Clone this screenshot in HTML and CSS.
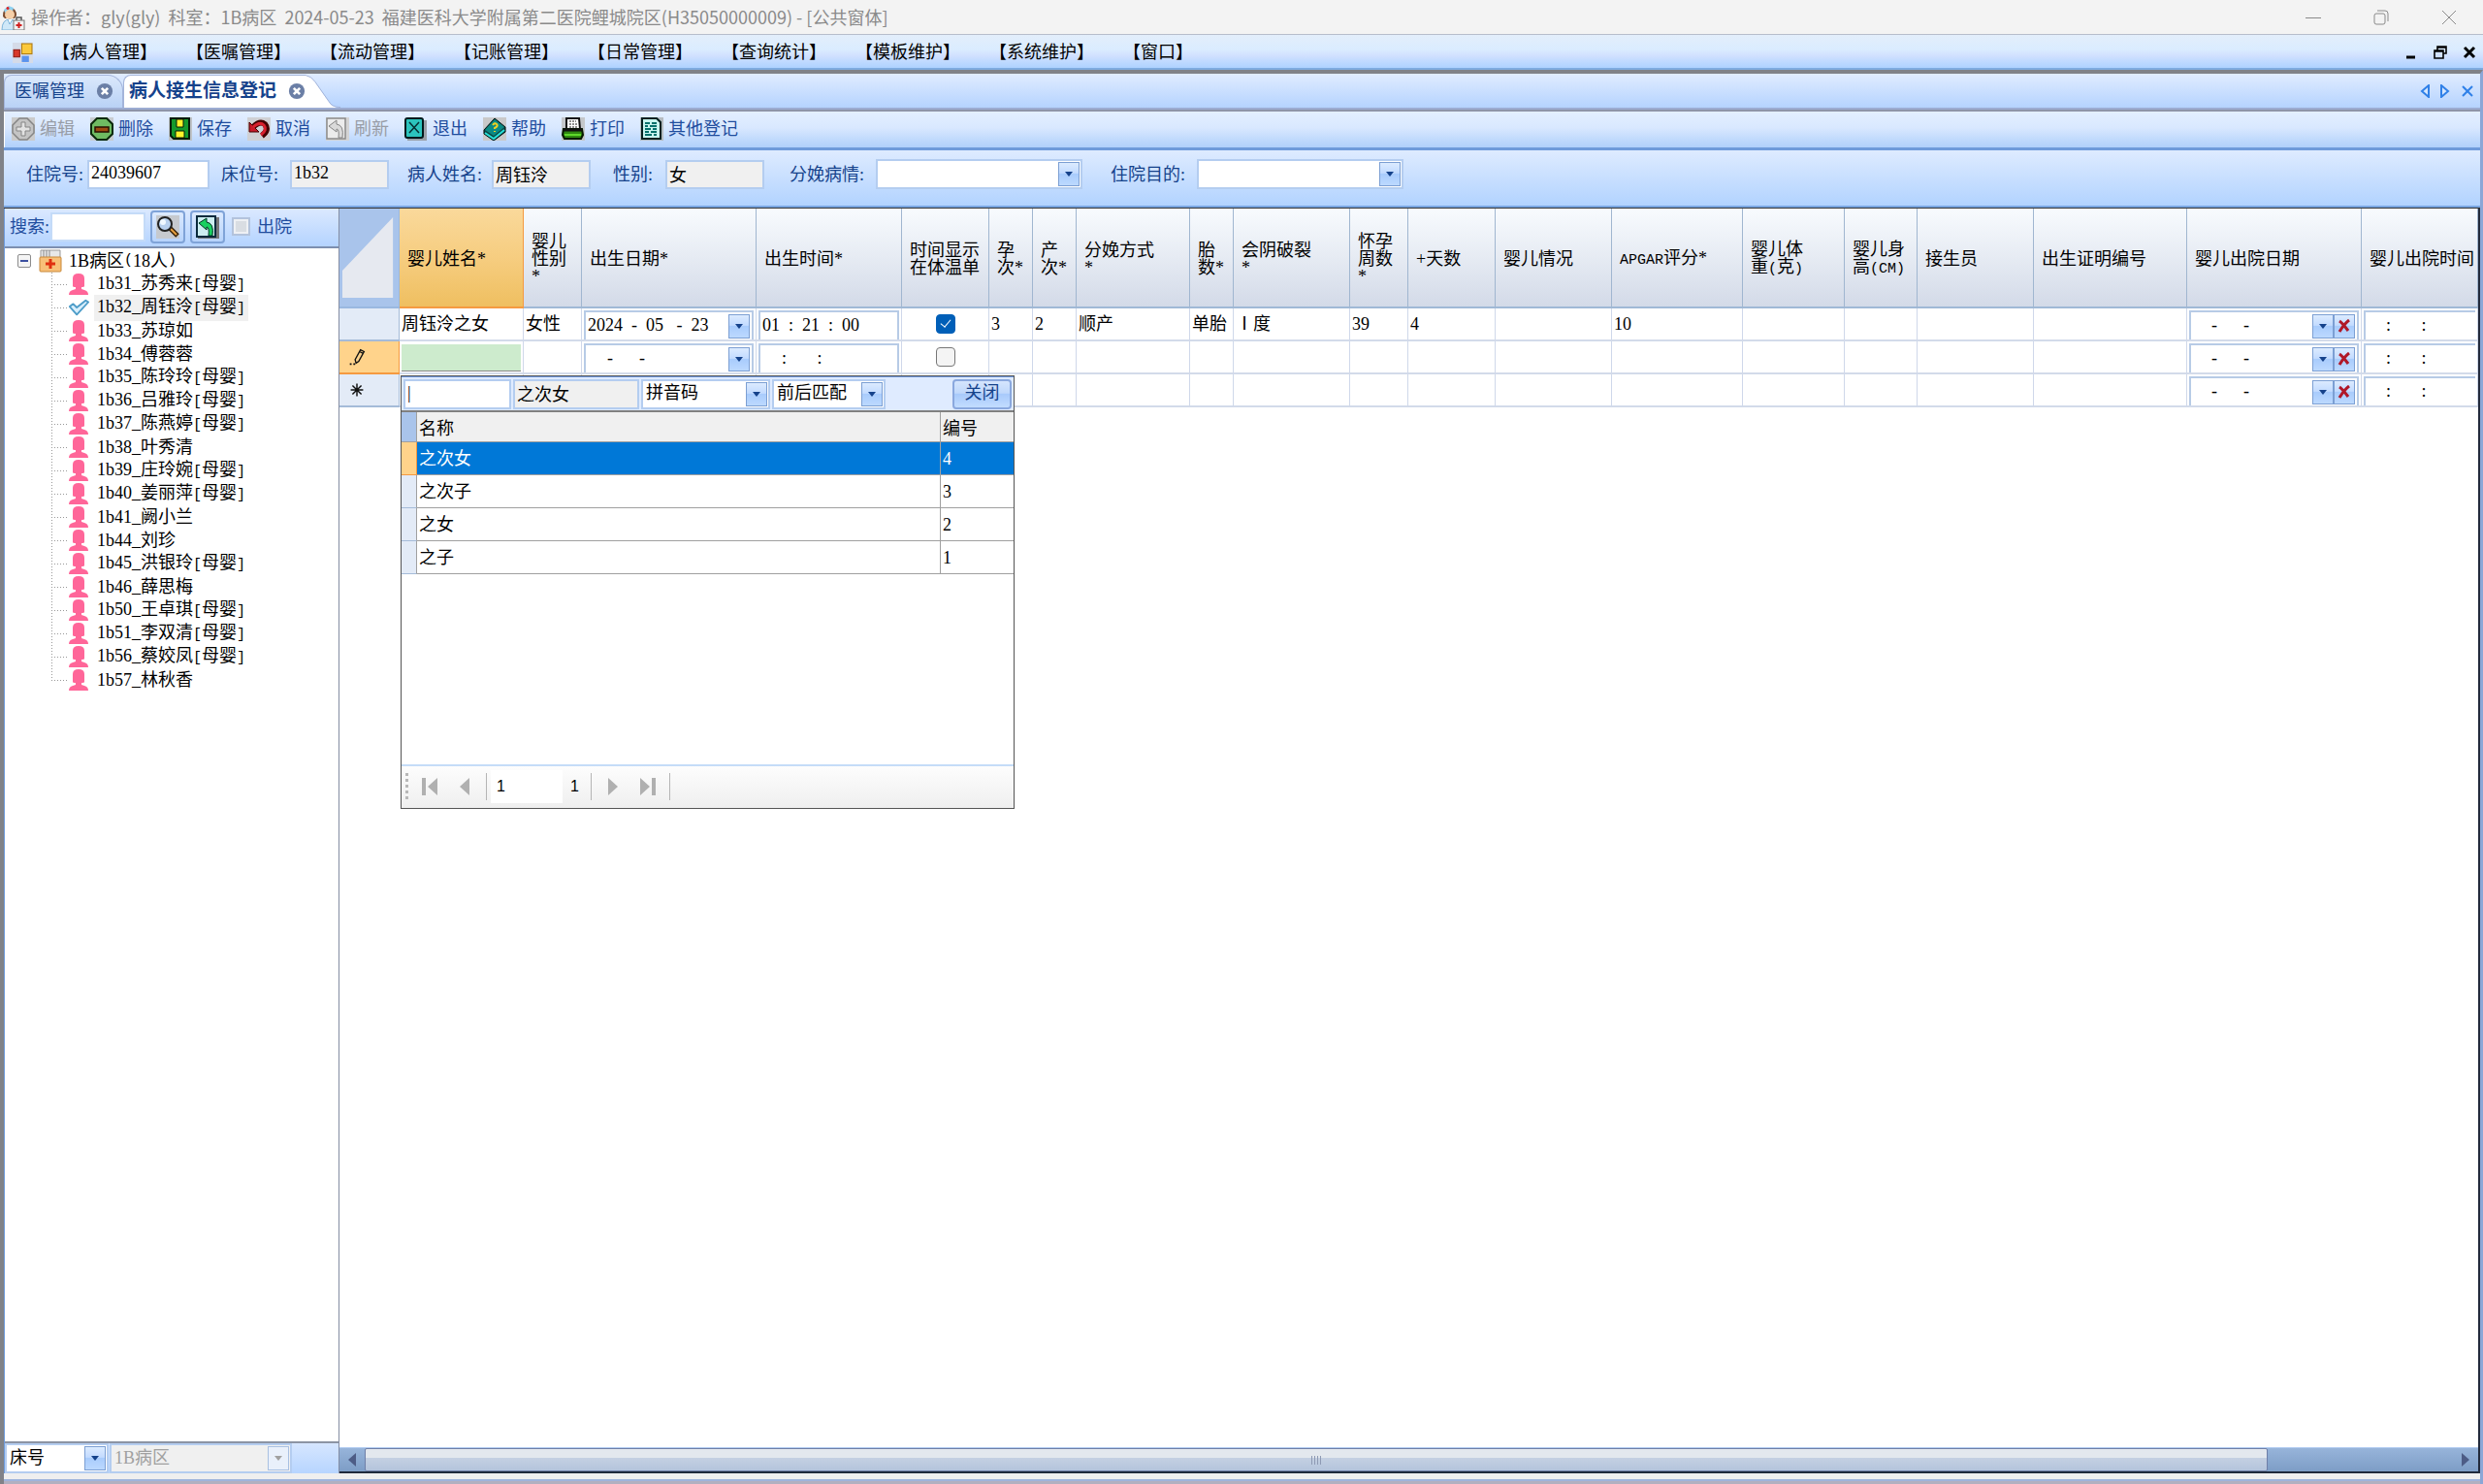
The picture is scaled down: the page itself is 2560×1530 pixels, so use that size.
FILE: index.html
```html
<!DOCTYPE html>
<html lang="zh-CN">
<head>
<meta charset="utf-8">
<title>病人接生信息登记</title>
<link rel="stylesheet" href="styles.css">
</head>
<body>
<svg class="defs" aria-hidden="true">
  <symbol id="i-woman" viewBox="0 0 22 24"><path fill="#ff6699" d="M5 14V6q0-5 6-5t6 5v8q0 1-2 1h-1v2l3 1q4 1 4 5H1q0-4 4-5l3-1v-2H7q-2 0-2-1z"/></symbol>
  <symbol id="i-check" viewBox="0 0 24 20"><path d="M2 9l4-3 4 4L20 2l3 2L10 18Z" fill="#d8eefc" stroke="#4c9cc8" stroke-width="2" stroke-linejoin="round"/></symbol>
  <symbol id="i-down" viewBox="0 0 8 5"><path d="M0 0h8L4 5z" fill="currentColor"/></symbol>
  <symbol id="i-x" viewBox="0 0 14 14"><path d="M2 2c3 2 6 6 9 10M12 1C8 4 5 8 2 13" stroke="#b01828" stroke-width="3" fill="none"/></symbol>
  <symbol id="i-close" viewBox="0 0 20 20"><circle cx="10" cy="10" r="9" fill="#6b7fa6"/><path d="M6.500 6.500l7 7m0-7l-7 7" stroke="#fff" stroke-width="3"/></symbol>
</svg>

<header class="titlebar">
  <svg class="app-icon" viewBox="0 0 26 26"><path d="M3 12q-1-8 7-9 7 0 7 8l-2 3H5z" fill="#7a4a2c"/><path d="M4 5l5-4 5 2-1 4-8 1z" fill="#8fd0f0"/><path d="M8 2v3M6.500 3.500h3" stroke="#e02020" stroke-width="1.500"/><circle cx="10" cy="10" r="5" fill="#f6cfa8"/><path d="M2 26q0-11 8-11t8 11z" fill="#cfe8f8" stroke="#7db4da"/><path d="M8 15l2 5 3-5" fill="#fff" stroke="#7db4da"/><path d="M17 16v-3h5v3" fill="none" stroke="#555" stroke-width="1.500"/><rect x="14" y="16" width="11" height="10" fill="#f2f2f2" stroke="#777"/><path d="M19.500 18v6m-3-3h6" stroke="#d02020" stroke-width="2"/></svg>
  <h1 class="title">操作者：gly(gly)&nbsp; 科室：1B病区&nbsp; 2024-05-23&nbsp; 福建医科大学附属第二医院鲤城院区(H35050000009) - [公共窗体]</h1>
  <div class="win-buttons">
    <button aria-label="最小化"><svg viewBox="0 0 16 16"><path d="M0 8.500h16"/></svg></button>
    <button aria-label="还原"><svg viewBox="0 0 16 16"><rect x="1" y="4" width="11" height="11" rx="2"/><path d="M4 1h8q3 0 3 3v8"/></svg></button>
    <button aria-label="关闭"><svg viewBox="0 0 16 16"><path d="M1 1l14 14M15 1L1 15"/></svg></button>
  </div>
</header>

<nav class="menubar">
  <svg class="mdi-icon" viewBox="0 0 20 20"><rect width="20" height="20" fill="#d5dbe8"/><rect x="9" y="1" width="10" height="10" fill="#fbc93c" stroke="#b07c10"/><rect x="1" y="7" width="6" height="7" fill="#d8382a" stroke="#8e1a12"/><rect x="9" y="13" width="7" height="6" fill="#5b93ee"/></svg>
  <div class="menus">
    <button>【病人管理】</button><button>【医嘱管理】</button><button>【流动管理】</button><button>【记账管理】</button><button>【日常管理】</button><button>【查询统计】</button><button>【模板维护】</button><button>【系统维护】</button><button>【窗口】</button>
  </div>
  <div class="mdi-buttons">
    <button aria-label="最小化子窗口"><svg viewBox="0 0 14 14"><path d="M2 12h9" stroke-width="3"/></svg></button>
    <button aria-label="还原子窗口"><svg viewBox="0 0 14 14"><path d="M4 5V1h9v7H10M4 2h9M1 5h9v8H1zM1 6h9" stroke-width="1.600"/></svg></button>
    <button aria-label="关闭子窗口"><svg viewBox="0 0 14 14"><path d="M2 2l10 10M12 2L2 12" stroke-width="3"/></svg></button>
  </div>
</nav>

<div class="workspace">
  <div class="tabstrip">
    <div class="tab tab-idle"><a href="#orders">医嘱管理</a><button aria-label="关闭标签"><svg><use href="#i-close"/></svg></button></div>
    <div class="tab tab-active"><a href="#birth">病人接生信息登记</a><button aria-label="关闭标签"><svg><use href="#i-close"/></svg></button>
    </div><svg class="tab-slope" viewBox="0 0 36 34"><path d="M0 0q6 2 10 8l14 20q3 6 12 6H0z" fill="#fff"/><path d="M0 .5q6 1 10 7l14 20q3 6 12 6" fill="none" stroke="#a3b4da"/></svg>
    <div class="tab-nav">
      <button aria-label="上一个"><svg viewBox="0 0 10 14"><path d="M9 1v12L2 7z"/></svg></button>
      <button aria-label="下一个"><svg viewBox="0 0 10 14"><path d="M1 1v12l7-6z"/></svg></button>
      <button aria-label="关闭"><svg class="x" viewBox="0 0 12 14"><path d="M1 2l10 10M11 2L1 12"/></svg></button>
    </div>
  </div>

  <div class="toolbar">
    <button disabled><svg viewBox="0 0 24 24"><rect width="24" height="24" fill="#cbcbcb"/><path d="M8 1h8l7 7v8l-7 7H8l-7-7V8z" fill="#c4c4c4" stroke="#858585" stroke-width="1.500"/><path d="M10 5h4v5h5v4h-5v5h-4v-5H5v-4h5z" fill="#e2e2e2" stroke="#858585"/></svg>编辑</button>
    <button><svg viewBox="0 0 24 24"><rect width="24" height="24" fill="#c8ccd0"/><path d="M7 1h10l6 6v10l-6 6H7l-6-6V7z" fill="#6fbb62" stroke="#0b2a0b" stroke-width="2"/><rect x="5" y="10" width="14" height="5" fill="#9c4a10" stroke="#2a1000" stroke-width="1.500"/></svg>删除</button>
    <button><svg viewBox="0 0 24 24"><rect width="24" height="24" fill="#bfc3c8"/><path d="M2 1h19v21H5l-3-3z" fill="#149a2c" stroke="#041a06" stroke-width="2"/><path d="M8 2h7v8H8zM7 14h9v7H7z" fill="#fff52a" stroke="#041a06"/></svg>保存</button>
    <button><svg viewBox="0 0 24 24"><rect width="24" height="24" fill="#cfd0d4"/><path d="M6 10q7-7 12-3 5 6-3 12" fill="none" stroke="#400" stroke-width="6"/><path d="M2 5v10h10z" fill="#c81828" stroke="#400"/><path d="M6 10q7-6 11-2 4 5-3 10" fill="none" stroke="#d8202e" stroke-width="3"/></svg>取消</button>
    <button disabled><svg viewBox="0 0 24 24"><rect width="24" height="24" fill="#d4d4d4"/><rect x="1" y="1" width="19" height="21" fill="#ececec" stroke="#8a8a8a" stroke-width="1.500"/><path d="M3 9l8-6v4q8 1 6 14h-4q1-9-2-9v3z" fill="#dadada" stroke="#858585"/></svg>刷新</button>
    <button><svg viewBox="0 0 24 24"><rect x="3" y="3" width="20" height="21" fill="#9aa0a8"/><rect x="1" y="1" width="18" height="20" rx="2" fill="#2cc4bd" stroke="#02191c" stroke-width="2"/><path d="M5 5l10 11M15 5L5 16" stroke="#053034" stroke-width="1.500"/></svg>退出</button>
    <button><svg viewBox="0 0 24 24"><rect width="24" height="24" fill="#c9c9c9"/><path d="M1 13L12 1l11 9v5l-12 9-10-7z" fill="#0a4a48" stroke="#021414"/><path d="M2 13L12 2l10 8-11 9z" fill="#0b8a84"/><path d="M2 16l9 6 11-9" fill="none" stroke="#28e0d8" stroke-width="2"/><path d="M10 8q2-3 4-1t-2 4v1m0 2v1" fill="none" stroke="#f0d020" stroke-width="2"/></svg>帮助</button>
    <button><svg viewBox="0 0 24 24"><rect width="24" height="24" fill="#c4c7ca"/><path d="M5 1h13l1 11H5z" fill="#fff" stroke="#111" stroke-width="2"/><path d="M8 4h7M8 7h8M8 10h8" stroke="#222" stroke-dasharray="2 1"/><path d="M2 12h19l1 6-2 4H3l-2-4z" fill="#2f8a10" stroke="#061a02" stroke-width="2"/><path d="M2 13h19" stroke="#111" stroke-width="3"/><path d="M3 18h17" stroke="#5fd82a" stroke-width="2"/></svg>打印</button>
    <button><svg viewBox="0 0 24 24"><rect width="24" height="24" fill="#b6bbc0"/><path d="M2 1h15l4 4v17H2z" fill="#c8f4ee" stroke="#03201f" stroke-width="2"/><path d="M5 6h5m2 0h5M5 9h3m2 0h7M5 12h6m2 0h4M5 15h4m2 0h6M5 18h7m2 0h3" stroke="#05716b" stroke-width="2"/></svg>其他登记</button>
  </div>

  <form class="patient">
    <label class="f-no">住院号:<input value="24039607"></label>
    <label class="f-bed">床位号:<input value="1b32" readonly></label>
    <label class="f-name">病人姓名:<input value="周钰泠" readonly></label>
    <label class="f-sex">性别:<input value="女" readonly></label>
    <label class="f-cond">分娩病情:<span class="combo"><select><option></option></select><span class="arrow"><svg><use href="#i-down"/></svg></span></span></label>
    <label class="f-goal">住院目的:<span class="combo"><select><option></option></select><span class="arrow"><svg><use href="#i-down"/></svg></span></span></label>
  </form>

  <main class="main">
    <aside class="sidebar">
      <div class="search">
        <label>搜索:<input></label>
        <button aria-label="搜索"><svg viewBox="0 0 24 24"><rect width="24" height="24" fill="#c6c9ce"/><path d="M14 13l8 8" stroke="#3a2408" stroke-width="5"/><path d="M15 14l6 6" stroke="#e8a040" stroke-width="2"/><circle cx="9" cy="9" r="7" fill="#b8d0ee" stroke="#222" stroke-width="2"/><circle cx="7" cy="7" r="3" fill="#f0f8ff"/></svg></button>
        <button aria-label="刷新"><svg viewBox="0 0 24 24"><rect x="2" y="2" width="22" height="22" fill="#777"/><rect x="1" y="1" width="19" height="21" fill="#cdeef0" stroke="#0a2a3c" stroke-width="2"/><path d="M3 8l8-5v4q8 1 6 14h-4q1-9-2-9v3z" fill="#18d060" stroke="#032"/></svg></button>
        <label class="out"><input type="checkbox" disabled>出院</label>
      </div>
      <div class="tree">
        <div class="root"><button class="expander" aria-label="折叠"></button><svg class="folder" viewBox="0 0 24 24"><path d="M2 1h20v9H2z" fill="#e8e8e8" stroke="#999"/><path d="M5 1v7M8 1v7M11 1v7" stroke="#888"/><rect x="1" y="8" width="22" height="15" rx="1" fill="#f8c078" stroke="#c88838"/><path d="M12 10v10m-5-5h10" stroke="#e03010" stroke-width="3"/></svg>1B病区<span class="mono">(</span>18人<span class="mono">)</span></div>
        <ul>
          <li><svg><use href="#i-woman"/></svg><span>1b31_苏秀来<span class="mono">[</span>母婴<span class="mono">]</span></span></li>
          <li><svg><use href="#i-check"/></svg><span class="selected">1b32_周钰泠<span class="mono">[</span>母婴<span class="mono">]</span></span></li>
          <li><svg><use href="#i-woman"/></svg><span>1b33_苏琼如</span></li>
          <li><svg><use href="#i-woman"/></svg><span>1b34_傅蓉蓉</span></li>
          <li><svg><use href="#i-woman"/></svg><span>1b35_陈玲玲<span class="mono">[</span>母婴<span class="mono">]</span></span></li>
          <li><svg><use href="#i-woman"/></svg><span>1b36_吕雅玲<span class="mono">[</span>母婴<span class="mono">]</span></span></li>
          <li><svg><use href="#i-woman"/></svg><span>1b37_陈燕婷<span class="mono">[</span>母婴<span class="mono">]</span></span></li>
          <li><svg><use href="#i-woman"/></svg><span>1b38_叶秀清</span></li>
          <li><svg><use href="#i-woman"/></svg><span>1b39_庄玲婉<span class="mono">[</span>母婴<span class="mono">]</span></span></li>
          <li><svg><use href="#i-woman"/></svg><span>1b40_姜丽萍<span class="mono">[</span>母婴<span class="mono">]</span></span></li>
          <li><svg><use href="#i-woman"/></svg><span>1b41_阙小兰</span></li>
          <li><svg><use href="#i-woman"/></svg><span>1b44_刘珍</span></li>
          <li><svg><use href="#i-woman"/></svg><span>1b45_洪银玲<span class="mono">[</span>母婴<span class="mono">]</span></span></li>
          <li><svg><use href="#i-woman"/></svg><span>1b46_薛思梅</span></li>
          <li><svg><use href="#i-woman"/></svg><span>1b50_王卓琪<span class="mono">[</span>母婴<span class="mono">]</span></span></li>
          <li><svg><use href="#i-woman"/></svg><span>1b51_李双清<span class="mono">[</span>母婴<span class="mono">]</span></span></li>
          <li><svg><use href="#i-woman"/></svg><span>1b56_蔡姣凤<span class="mono">[</span>母婴<span class="mono">]</span></span></li>
          <li><svg><use href="#i-woman"/></svg><span>1b57_林秋香</span></li>
        </ul>
      </div>
      <div class="side-foot">
        <span class="combo by"><select aria-label="排序"><option>床号</option></select><span class="arrow"><svg><use href="#i-down"/></svg></span></span>
        <span class="combo ward off"><select aria-label="病区" disabled><option>1B病区</option></select><span class="arrow"><svg><use href="#i-down"/></svg></span></span>
      </div>
    </aside>

    <section class="grid">
      <table class="births">
        <colgroup><col class="w62"><col class="w128"><col class="w60"><col class="w180"><col class="w150"><col class="w90"><col class="w45"><col class="w45"><col class="w118"><col class="w45"><col class="w120"><col class="w60"><col class="w90"><col class="w120"><col class="w135"><col class="w105"><col class="w75"><col class="w120"><col class="w158"><col class="w180"><col></colgroup>
        <thead>
          <tr>
            <th class="corner"><svg viewBox="0 0 58 90" preserveAspectRatio="none"><path d="M55 3v83H0V58z"/></svg></th>
            <th class="hot">婴儿姓名*</th><th>婴儿<br>性别<br>*</th><th>出生日期*</th><th>出生时间*</th><th>时间显示<br>在体温单</th><th>孕<br>次*</th><th>产<br>次*</th><th>分娩方式<br>*</th><th>胎<br>数*</th><th>会阴破裂<br>*</th><th>怀孕<br>周数<br>*</th><th>+天数</th><th>婴儿情况</th><th><span class="mono">APGAR</span>评分*</th><th>婴儿体<br>重<span class="mono">(</span>克<span class="mono">)</span></th><th>婴儿身<br>高<span class="mono">(CM)</span></th><th>接生员</th><th>出生证明编号</th><th>婴儿出院日期</th><th>婴儿出院时间</th>
          </tr>
        </thead>
        <tbody>
          <tr>
            <td class="head"></td><td>周钰泠之女</td><td>女性</td>
            <td class="edit"><div class="box"><input aria-label="出生日期" value="2024&nbsp;&nbsp;-&nbsp;&nbsp;05&nbsp;&nbsp;&nbsp;-&nbsp;&nbsp;23"><button class="arrow" aria-label="选择日期"><svg><use href="#i-down"/></svg></button></div></td>
            <td class="edit"><div class="box"><input aria-label="出生时间" value="01&nbsp;&nbsp;:&nbsp;&nbsp;21&nbsp;&nbsp;:&nbsp;&nbsp;00"></div></td>
            <td class="tick"><input type="checkbox" aria-label="时间显示在体温单" checked></td>
            <td>3</td><td>2</td><td>顺产</td><td>单胎</td><td>Ⅰ度</td><td>39</td><td>4</td><td></td><td>10</td><td></td><td></td><td></td><td></td>
            <td class="edit"><div class="box out-date"><input aria-label="婴儿出院日期" value="-&nbsp;&nbsp;&nbsp;&nbsp;&nbsp;&nbsp;-"><button class="arrow" aria-label="选择日期"><svg><use href="#i-down"/></svg></button><button class="arrow" aria-label="清除"><svg class="del"><use href="#i-x"/></svg></button></div></td>
            <td class="edit"><div class="box open out-date"><input aria-label="婴儿出院时间" value=":&nbsp;&nbsp;&nbsp;&nbsp;&nbsp;&nbsp;&nbsp;:"></div></td>
          </tr>
          <tr>
            <td class="head current"><svg viewBox="0 0 24 24"><path d="M11 19l-1-4 6-11 4 2-6 11zM15 6l4 2" fill="none" stroke="#111" stroke-width="1.500"/><path d="M4 20h2m2 0h2" stroke="#111" stroke-width="2"/></svg></td>
            <td class="edit"><div class="active-cell"></div></td><td></td>
            <td class="edit"><div class="box in-date"><input aria-label="出生日期" value="-&nbsp;&nbsp;&nbsp;&nbsp;&nbsp;&nbsp;-"><button class="arrow" aria-label="选择日期"><svg><use href="#i-down"/></svg></button></div></td>
            <td class="edit"><div class="box in-date"><input aria-label="出生时间" value=":&nbsp;&nbsp;&nbsp;&nbsp;&nbsp;&nbsp;&nbsp;:"></div></td>
            <td class="tick"><input type="checkbox" aria-label="时间显示在体温单"></td>
            <td></td><td></td><td></td><td></td><td></td><td></td><td></td><td></td><td></td><td></td><td></td><td></td><td></td>
            <td class="edit"><div class="box out-date"><input aria-label="婴儿出院日期" value="-&nbsp;&nbsp;&nbsp;&nbsp;&nbsp;&nbsp;-"><button class="arrow" aria-label="选择日期"><svg><use href="#i-down"/></svg></button><button class="arrow" aria-label="清除"><svg class="del"><use href="#i-x"/></svg></button></div></td>
            <td class="edit"><div class="box open out-date"><input aria-label="婴儿出院时间" value=":&nbsp;&nbsp;&nbsp;&nbsp;&nbsp;&nbsp;&nbsp;:"></div></td>
          </tr>
          <tr>
            <td class="head"><svg viewBox="0 0 24 24"><path d="M12 5v14M5 12h14M7 7l10 10M17 7L7 17" stroke="#111" stroke-width="1.600"/></svg></td>
            <td></td><td></td><td></td><td></td><td></td><td></td><td></td><td></td><td></td><td></td><td></td><td></td><td></td><td></td><td></td><td></td><td></td><td></td>
            <td class="edit"><div class="box out-date"><input aria-label="婴儿出院日期" value="-&nbsp;&nbsp;&nbsp;&nbsp;&nbsp;&nbsp;-"><button class="arrow" aria-label="选择日期"><svg><use href="#i-down"/></svg></button><button class="arrow" aria-label="清除"><svg class="del"><use href="#i-x"/></svg></button></div></td>
            <td class="edit"><div class="box open out-date"><input aria-label="婴儿出院时间" value=":&nbsp;&nbsp;&nbsp;&nbsp;&nbsp;&nbsp;&nbsp;:"></div></td>
          </tr>
        </tbody>
      </table>

      <div class="hscroll">
        <button aria-label="向左滚动"><svg viewBox="0 0 8 14"><path d="M8 0v14L0 7z"/></svg></button>
        <div class="thumb"><i></i><i></i><i></i><i></i></div>
        <button aria-label="向右滚动"><svg viewBox="0 0 8 14"><path d="M0 0v14l8-7z"/></svg></button>
      </div>

      <div class="popup">
        <div class="pop-bar">
          <input class="pop-key" aria-label="检索" value="|">
          <input class="pop-name" aria-label="当前值" value="之次女" readonly>
          <span class="combo code"><select aria-label="编码方式"><option>拼音码</option></select><span class="arrow"><svg><use href="#i-down"/></svg></span></span>
          <span class="combo match"><select aria-label="匹配方式"><option>前后匹配</option></select><span class="arrow"><svg><use href="#i-down"/></svg></span></span>
          <button class="pop-close">关闭</button>
        </div>
        <table class="choices">
          <colgroup><col class="w16"><col><col class="w75"></colgroup>
          <thead><tr><th class="mark"></th><th>名称</th><th>编号</th></tr></thead>
          <tbody>
            <tr class="chosen"><td class="mark"></td><td>之次女</td><td>4</td></tr>
            <tr><td class="mark"></td><td>之次子</td><td>3</td></tr>
            <tr><td class="mark"></td><td>之女</td><td>2</td></tr>
            <tr><td class="mark"></td><td>之子</td><td>1</td></tr>
          </tbody>
        </table>
        <div class="pager">
          <span class="grip"></span>
          <button aria-label="首页"><svg viewBox="0 0 18 18"><path d="M1 0h4v18H1zM17 0v18L7 9z"/></svg></button>
          <button aria-label="上一页"><svg viewBox="0 0 18 18"><path d="M14 0v18L4 9z"/></svg></button>
          <span class="sep"></span>
          <input aria-label="页码" value="1"><span class="total">1</span>
          <span class="sep"></span>
          <button aria-label="下一页"><svg viewBox="0 0 18 18"><path d="M4 0v18l10-9z"/></svg></button>
          <button aria-label="末页"><svg viewBox="0 0 18 18"><path d="M13 0h4v18h-4zM1 0v18l10-9z"/></svg></button>
          <span class="sep"></span>
        </div>
      </div>
    </section>
  </main>
  <div class="base"></div>
</div>
</body>
</html>
```
FILE: styles.css
```css
* { box-sizing: border-box; }
html, body { height: 100%; }
body {
  margin: 0;
  display: flex;
  flex-direction: column;
  overflow: hidden;
  background: #fff;
  color: #000;
  font: 18px/24px "Liberation Serif", "Noto Sans CJK SC", serif;
}
button, input, select { font: inherit; color: inherit; margin: 0; padding: 0; border: 0; background: none; border-radius: 0; min-width: 0; }
button { display: inline-flex; align-items: center; justify-content: center; }
select { appearance: none; }
svg { display: block; flex: none; }
ul { list-style: none; margin: 0; padding: 0; }
a { color: inherit; text-decoration: none; }
.defs { width: 0; height: 0; position: absolute; }
.mono { font-family: "Liberation Mono", monospace; font-size: 15px; }

.titlebar { flex: none; height: 35px; display: flex; align-items: center; gap: 6px; background: #f3f3f3; color: #8a8a8a; font-family: "Noto Sans CJK SC", sans-serif; }
.app-icon { width: 26px; height: 26px; }
.title { flex: 1; margin: 0; padding-bottom: 2px; font-size: 18px; font-weight: 400; line-height: 24px; white-space: nowrap; }
.win-buttons { display: flex; }
.win-buttons button { width: 70px; height: 34px; }
.win-buttons svg { width: 16px; height: 16px; fill: none; stroke: #8a8a8a; }

.menubar { flex: none; height: 37px; display: flex; align-items: center; padding: 2px 7px 0 13px; border-top: 1px solid #b6bdcb; border-bottom: 2px solid #7fabdf; background: linear-gradient(#e3eefb, #daecff 45%, #d3e2ff 60%, #aed2ff); }
.mdi-icon { width: 21px; height: 21px; }
.menus { flex: 1; display: flex; gap: 30px; padding-left: 20px; }
.menus button { white-space: nowrap; }
.mdi-buttons { display: flex; gap: 16px; }
.mdi-buttons svg { width: 14px; height: 14px; fill: none; stroke: #000; }

.workspace { flex: 1; min-height: 0; display: flex; flex-direction: column; border: 4px solid #808288; border-width: 4px 3px 0 4px; border-right-color: #8ba6d6; }

.tabstrip { flex: none; height: 37px; display: flex; align-items: flex-end; color: #15428b; background: linear-gradient(#e0ecff, #b5d3ff); border-bottom: 2px solid #9cacd2; }
.tab { height: 34px; display: flex; align-items: center; padding-bottom: 2px; border: 1px solid #a3b4da; border-bottom: 0; }
.tab svg { width: 18px; height: 18px; }
.tab-idle { width: 123px; padding-left: 10px; gap: 12px; border-radius: 8px 16px 0 0; background: linear-gradient(#dbe8fb, #b9d2f6); }
.tab-active { padding-left: 5px; gap: 12px; background: #fff; border-right: 0; border-radius: 8px 0 0 0; font-size: 19px; font-weight: 700; }
.tab-slope { width: 36px; height: 34px; }
.tab-nav { margin-left: auto; display: flex; align-self: center; gap: 11px; padding-right: 6px; }
.tab-nav svg { width: 10px; height: 14px; fill: #d5e6ff; stroke: #2f80e8; stroke-width: 2; }
.tab-nav .x { width: 14px; }

.toolbar { flex: none; height: 42px; display: flex; align-items: center; gap: 16px; padding: 0 0 2px 8px; color: #1f4d9e; border-top: 2px solid #8f95a8; border-bottom: 3px solid #6f9bdb; box-shadow: inset 1px 0 #fff; background: linear-gradient(#e3efff, #d9e8ff 45%, #b0d0fb); }
.toolbar button { gap: 5px; white-space: nowrap; }
.toolbar button:disabled { color: #989da6; }
.toolbar svg { width: 24px; height: 24px; }

.patient { flex: none; height: 59px; display: flex; align-items: center; padding: 0 0 8px 23px; color: #15428b; background: linear-gradient(#deebff, #b2d3ff); border-bottom: 2px solid #79a6e2; }
.patient label { display: flex; align-items: center; justify-content: space-between; }
.patient input { height: 30px; padding: 0 3px 2px 2px; color: #000; background: #fff; border: 2px solid #b4cdf0; }
.patient input[readonly] { background: #f0f0f0; }
.patient .combo { width: 213px; }
.f-no { width: 189px; }
.f-no input { width: 126px; }
.f-bed { width: 173px; margin-left: 12px; }
.f-name { width: 189px; margin-left: 19px; }
.f-sex { width: 156px; margin-left: 23px; }
.f-bed input, .f-name input, .f-sex input { width: 102px; }
.f-cond, .f-goal { width: 302px; margin-left: 26px; }
.f-goal { margin-left: 29px; }

.combo { display: flex; align-items: center; height: 31px; padding-right: 1px; background: #fff; border: 2px solid #b4cdf0; }
.combo select { flex: 1; height: 100%; padding: 0 0 2px 3px; color: #000; opacity: 1; }
.arrow { flex: none; width: 22px; height: 25px; display: flex; align-items: center; justify-content: center; color: #15428b; border: 1px solid #7c9fd3; background: linear-gradient(#dcebff, #c3dbff 45%, #a9ccfc 50%, #bcd9ff); }
.arrow svg { width: 8px; height: 5px; }
.arrow .del { width: 14px; height: 14px; }
.combo.off { background: #f0f0f0; }
.combo.off select { color: #a0a0a0; }
.combo.off .arrow { color: #a0a0a0; border-color: #a9c0e2; background: #e9f0fb; }

.main { flex: 1; min-height: 0; display: flex; border-top: 1px solid #333; }
.sidebar { flex: none; width: 346px; display: flex; flex-direction: column; border-right: 1px solid #848da3; border-left: 1px solid #6f9bdb; }
.search { flex: none; height: 41px; display: flex; align-items: center; gap: 5px; padding: 0 5px 2px; color: #1f4d9e; background: linear-gradient(#dbe9ff, #b4d3ff); border-bottom: 2px solid #7d8fb0; }
.search label { display: flex; align-items: center; }
.search label input { width: 98px; height: 30px; margin: 0 0 0 1px; background: #fff; border: 2px solid #c4dbf8; }
.search button { width: 36px; height: 34px; border: 2px solid #7fa3d8; border-radius: 4px; background: linear-gradient(#dceaff, #b7d3fb); }
.search svg { width: 24px; height: 24px; }
.search .out { padding-left: 2px; gap: 7px; }
.search .out input { appearance: none; width: 19px; height: 19px; margin: 0; border: 2px solid #b3c3dc; background: #d9dde2; box-shadow: inset 0 0 0 2px #eef0f4; }

.tree { flex: 1; min-height: 0; padding: 1px 0 0 13px; background: #fff; line-height: 24px; }
.root { display: flex; align-items: center; height: 24px; }
.expander { width: 14px; height: 14px; border: 1px solid #8c8c8c; border-radius: 2px; background: linear-gradient(#3c50a0, #3c50a0) 2px 5px / 8px 2px no-repeat #f4f4f4; }
.folder { width: 24px; height: 24px; margin: 0 7px 0 8px; }
.tree ul { padding-left: 35px; }
.tree li { display: flex; align-items: center; height: 24px; gap: 5px; white-space: nowrap; }
.tree li::before { content: ""; flex: none; width: 17px; height: 24px; margin-right: -5px; background: repeating-linear-gradient(#999 0 1px, transparent 1px 3px) 0 0 / 1px 100% no-repeat, repeating-linear-gradient(90deg, #999 0 1px, transparent 1px 3px) 0 12px / 100% 1px no-repeat; }
.tree li:last-child::before { background-size: 1px 50%, 100% 1px; }
.tree li svg { width: 22px; height: 24px; }
.tree li > span { padding: 0 3px; }
.selected { background: #f0f0f0; }

.side-foot { flex: none; height: 33px; display: flex; gap: 1px; border-top: 2px solid #8c94a4; background: linear-gradient(#d6e6ff, #b7d5ff); }
.by { width: 107px; }
.ward { width: 188px; }

.grid { flex: 1; min-width: 0; position: relative; display: flex; flex-direction: column; justify-content: space-between; background: #fff; border-right: 2px solid #222a3c; }
.births { width: 100%; table-layout: fixed; border-collapse: separate; border-spacing: 0; }
.births th, .births td { padding: 0; white-space: nowrap; overflow: hidden; text-align: left; font-weight: 400; }
.births th { height: 103px; padding: 3px 0 0 8px; line-height: 18px; border-right: 1px solid #a0b6d0; border-bottom: 2px solid #a0b9d6; background: linear-gradient(#f8fbfe, #e6ebf3 50%, #d3dae8); }
.births th.hot { border-color: #f59a40; background: linear-gradient(#fad99b, #f6cd80 50%, #efbf60); }
.births th.corner { padding: 3px; border-color: #9ab8e0; background: #a9c4eb; }
.corner svg { width: 100%; height: 90px; fill: #e6e9f0; }
.births td { height: 34px; padding-left: 2px; border-right: 1px solid #cfd8ea; border-bottom: 2px solid #d3dbea; }
.births td.head { padding-left: 7px; background: #e3ebf7; border-color: #a5bbd8; }
.births td.head.current { background: #ffd38b; border-color: #f59a40; }
.head svg { width: 22px; height: 22px; }
.births td.edit { padding: 2px 2px 0 2px; }
.box { display: flex; align-items: center; height: 30px; padding: 0 2px 0 2px; border: 2px solid #b7cbe6; border-bottom: 0; }
.box input { flex: 1; height: 24px; padding-bottom: 2px; }
.box.in-date { padding-left: 22px; }
.box.out-date { padding-left: 21px; }
.box.open { border-right: 0; }
.births td.tick { padding: 0; text-align: center; }
.tick input { appearance: none; display: block; width: 20px; height: 20px; margin: 0 auto; border: 1px solid #777; border-radius: 4px; background: #f4f4f4; }
.tick input:checked { border-color: #005fb8; background: #005fb8; }
.tick input:checked::after { content: ""; display: block; width: 5px; height: 9px; margin: 2px 0 0 6px; border: solid #fff; border-width: 0 1px 1px 0; transform: rotate(40deg); }
.active-cell { height: 28px; background: #cdebcd; border-bottom: 1px solid #888; }

.w16 { width: 16px; } .w45 { width: 45px; } .w60 { width: 60px; } .w62 { width: 62px; }
.w75 { width: 75px; } .w90 { width: 90px; } .w105 { width: 105px; } .w118 { width: 117px; }
.w120 { width: 120px; } .w128 { width: 128px; } .w135 { width: 135px; } .w150 { width: 150px; }
.w158 { width: 158px; } .w180 { width: 180px; }

.hscroll { flex: none; height: 27px; display: flex; background: linear-gradient(#97b4da, #7d9dc6); border-top: 1px solid #b3cdf2; border-bottom: 2px solid #1f2a3c; }
.hscroll button { width: 26px; }
.hscroll button:last-child { margin-left: auto; }
.hscroll svg { width: 8px; height: 14px; fill: #4d5c86; }
.thumb { width: 89%; display: flex; align-items: center; justify-content: center; gap: 2px; border: 1px solid #6f7fa8; border-radius: 2px; background: linear-gradient(#e3e8ee 40%, #c4d0e2 42%, #b4c4dc); }
.thumb i { width: 1px; height: 9px; background: #8e9ab4; }

.popup { position: absolute; left: 63px; top: 172px; width: 633px; height: 447px; display: flex; flex-direction: column; background: #fff; border: 1px solid #555; }
.pop-bar { flex: none; height: 37px; display: flex; align-items: center; gap: 2px; padding: 0 2px; background: #dfebff; border-top: 1px solid #6f97dc; border-bottom: 2px solid #808080; }
.pop-bar input { height: 31px; padding: 0 2px 2px; background: #fff; border: 2px solid #b4cdf0; }
.pop-bar .pop-name { width: 130px; background: #f0f0f0; }
.pop-bar .pop-key { width: 111px; }
.code { width: 133px; }
.match { width: 117px; }
.pop-close { width: 61px; height: 31px; margin-left: auto; padding-bottom: 2px; color: #15428b; border: 2px solid #8aa8de; border-radius: 4px; background: linear-gradient(#d5e5fd, #c0d8fb 45%, #a8cafb 50%, #c2dcff); }
.choices { width: 100%; table-layout: fixed; border-collapse: separate; border-spacing: 0; }
.choices th, .choices td { padding: 0 2px; text-align: left; font-weight: 400; border-right: 1px solid #a0a0a0; border-bottom: 1px solid #a0a0a0; }
.choices th:last-child, .choices td:last-child { border-right: 0; }
.choices th { height: 31px; padding-top: 4px; background: #f0f0f0; }
.choices td { height: 34px; }
.choices td.mark { background: #e3ebf7; border-bottom-color: #a5bbd8; }
.choices th.mark { background: #a9c4eb; }
.choices .chosen td { color: #fff; background: #0078d7; }
.choices .chosen td.mark { background: #ffd38b; border-color: #f59a40; }
.pager { flex: none; height: 45px; margin-top: auto; display: flex; align-items: center; padding: 0 0 2px 4px; font-family: "Liberation Sans", sans-serif; font-size: 16px; background: linear-gradient(#fdfdfd, #efefef); border-top: 2px solid #c5dcf8; }
.pager svg { width: 18px; height: 18px; fill: #b0b0b0; }
.pager button { width: 36px; }
.grip { width: 3px; height: 28px; margin-right: 4px; background: repeating-linear-gradient(#b8b8b8 0 3px, transparent 3px 6px); }
.sep { width: 1px; height: 28px; margin: 0 4px; background: #b5b5b5; }
.pager input { width: 74px; height: 34px; padding-left: 6px; background: #fff; }
.total { padding: 0 8px; }

.base { flex: none; height: 11px; background: #efefef; border-bottom: 3px solid #b2b0c0; box-shadow: inset 0 -2px #9fb4dc; }
```
